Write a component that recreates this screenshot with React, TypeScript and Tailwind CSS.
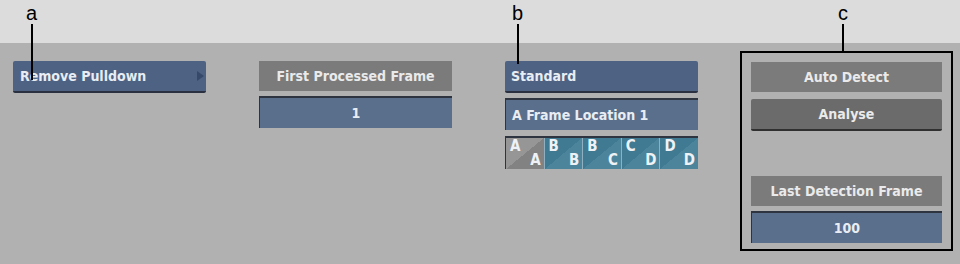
const font = { fontFamily: '"DejaVu Sans Condensed", "Open Sans", sans-serif' }

function Callout({ letter, lineH }: { letter: string; lineH: string }) {
  return (
    <div className="flex flex-col items-center">
      <span className="text-[20px] leading-[21px] text-black" style={{ fontFamily: '"Liberation Sans", sans-serif' }}>
        {letter}
      </span>
      <div className={`w-[2px] bg-black ${lineH}`} />
    </div>
  )
}

function GrayLabel({ text }: { text: string }) {
  return (
    <div className="h-[30px] flex items-center justify-center bg-[#7b7b7b] text-[14px] text-[#eaeaea] font-bold">
      {text}
    </div>
  )
}

function ValueField({ text, left }: { text: string; left?: boolean }) {
  return (
    <div
      className={`h-[32px] flex items-center ${left ? 'justify-start pl-[6px]' : 'justify-center'} bg-[#5a6f8c] border-t-2 border-l border-[#2e3440] text-[14px] text-[#e8edf3] font-bold`}
    >
      {text}
    </div>
  )
}

const cells: [string, string, boolean][] = [
  ['A', 'A', true],
  ['B', 'B', false],
  ['B', 'C', false],
  ['C', 'D', false],
  ['D', 'D', false],
]

export default function App() {
  return (
    <div className="relative w-[960px] h-[264px] bg-[#b1b1b1] flex flex-col overflow-hidden" style={font}>
      <div className="h-[43px] bg-[#dcdcdc] shrink-0" />
      <div className="flex items-start pl-[13px] pt-[18px]">
        {/* a */}
        <div className="w-[193px]">
          <div className="h-[32px] flex items-center justify-between pl-[7px] pr-[2px] bg-[#4e6283] border-b-2 border-[#2a3040] rounded-[2px] text-[14px] text-[#e8edf3] font-bold">
            <span>Remove Pulldown</span>
            <svg width="7" height="10" viewBox="0 0 7 10">
              <path d="M0 0 L7 5 L0 10 Z" fill="#37496a" />
            </svg>
          </div>
        </div>

        <div className="w-[193px] ml-[53px] flex flex-col gap-[5px]">
          <GrayLabel text="First Processed Frame" />
          <ValueField text="1" />
        </div>

        <div className="w-[193px] ml-[53px] flex flex-col gap-[5px]">
          <div className="h-[32px] flex items-center pl-[6px] bg-[#4e6283] border-b-2 border-[#2a3040] rounded-[2px] text-[14px] text-[#e8edf3] font-bold">
            Standard
          </div>
          <ValueField text="A Frame Location 1" left />
          <div className="h-[33px] flex border-t-2 border-l border-[#2e3440] mt-[1px]">
            {cells.map(([t, b, gray], i) => (
              <div
                key={i}
                className={`flex-1 relative text-[15px] leading-none font-bold text-[#eef2f7] ${i > 0 ? 'border-l border-[#8eb0c0]' : ''} ${gray ? 'bg-[linear-gradient(to_bottom_right,#969696_50%,#828282_50%)]' : 'bg-[linear-gradient(to_bottom_right,#3f7a92_50%,#4c859b_50%)]'}`}
              >
                <span className="absolute left-[4px] top-[1px]">{t}</span>
                <span className="absolute right-[3px] bottom-[1px]">{b}</span>
              </div>
            ))}
          </div>
        </div>
      </div>

      {/* callout lines overlay */}
      <div className="absolute left-[26px] top-[3px]">
        <Callout letter="a" lineH="h-[56px]" />
      </div>
      <div className="absolute left-[512px] top-[3px]">
        <Callout letter="b" lineH="h-[40px]" />
      </div>
      <div className="absolute left-[838px] top-[3px]">
        <Callout letter="c" lineH="h-[28px]" />
      </div>

      {/* c box */}
      <div className="absolute left-[740px] top-[51px] w-[213px] h-[200px] border-2 border-black flex flex-col px-[9px] pt-[9px]">
        <GrayLabel text="Auto Detect" />
        <div className="mt-[7px] h-[32px] flex items-center justify-center bg-[#6b6b6b] border-b-2 border-[#303030] rounded-[2px] text-[14px] text-[#eaeaea] font-bold">
          Analyse
        </div>
        <div className="mt-[45px]">
          <GrayLabel text="Last Detection Frame" />
        </div>
        <div className="mt-[5px]">
          <ValueField text="100" />
        </div>
      </div>
    </div>
  )
}
